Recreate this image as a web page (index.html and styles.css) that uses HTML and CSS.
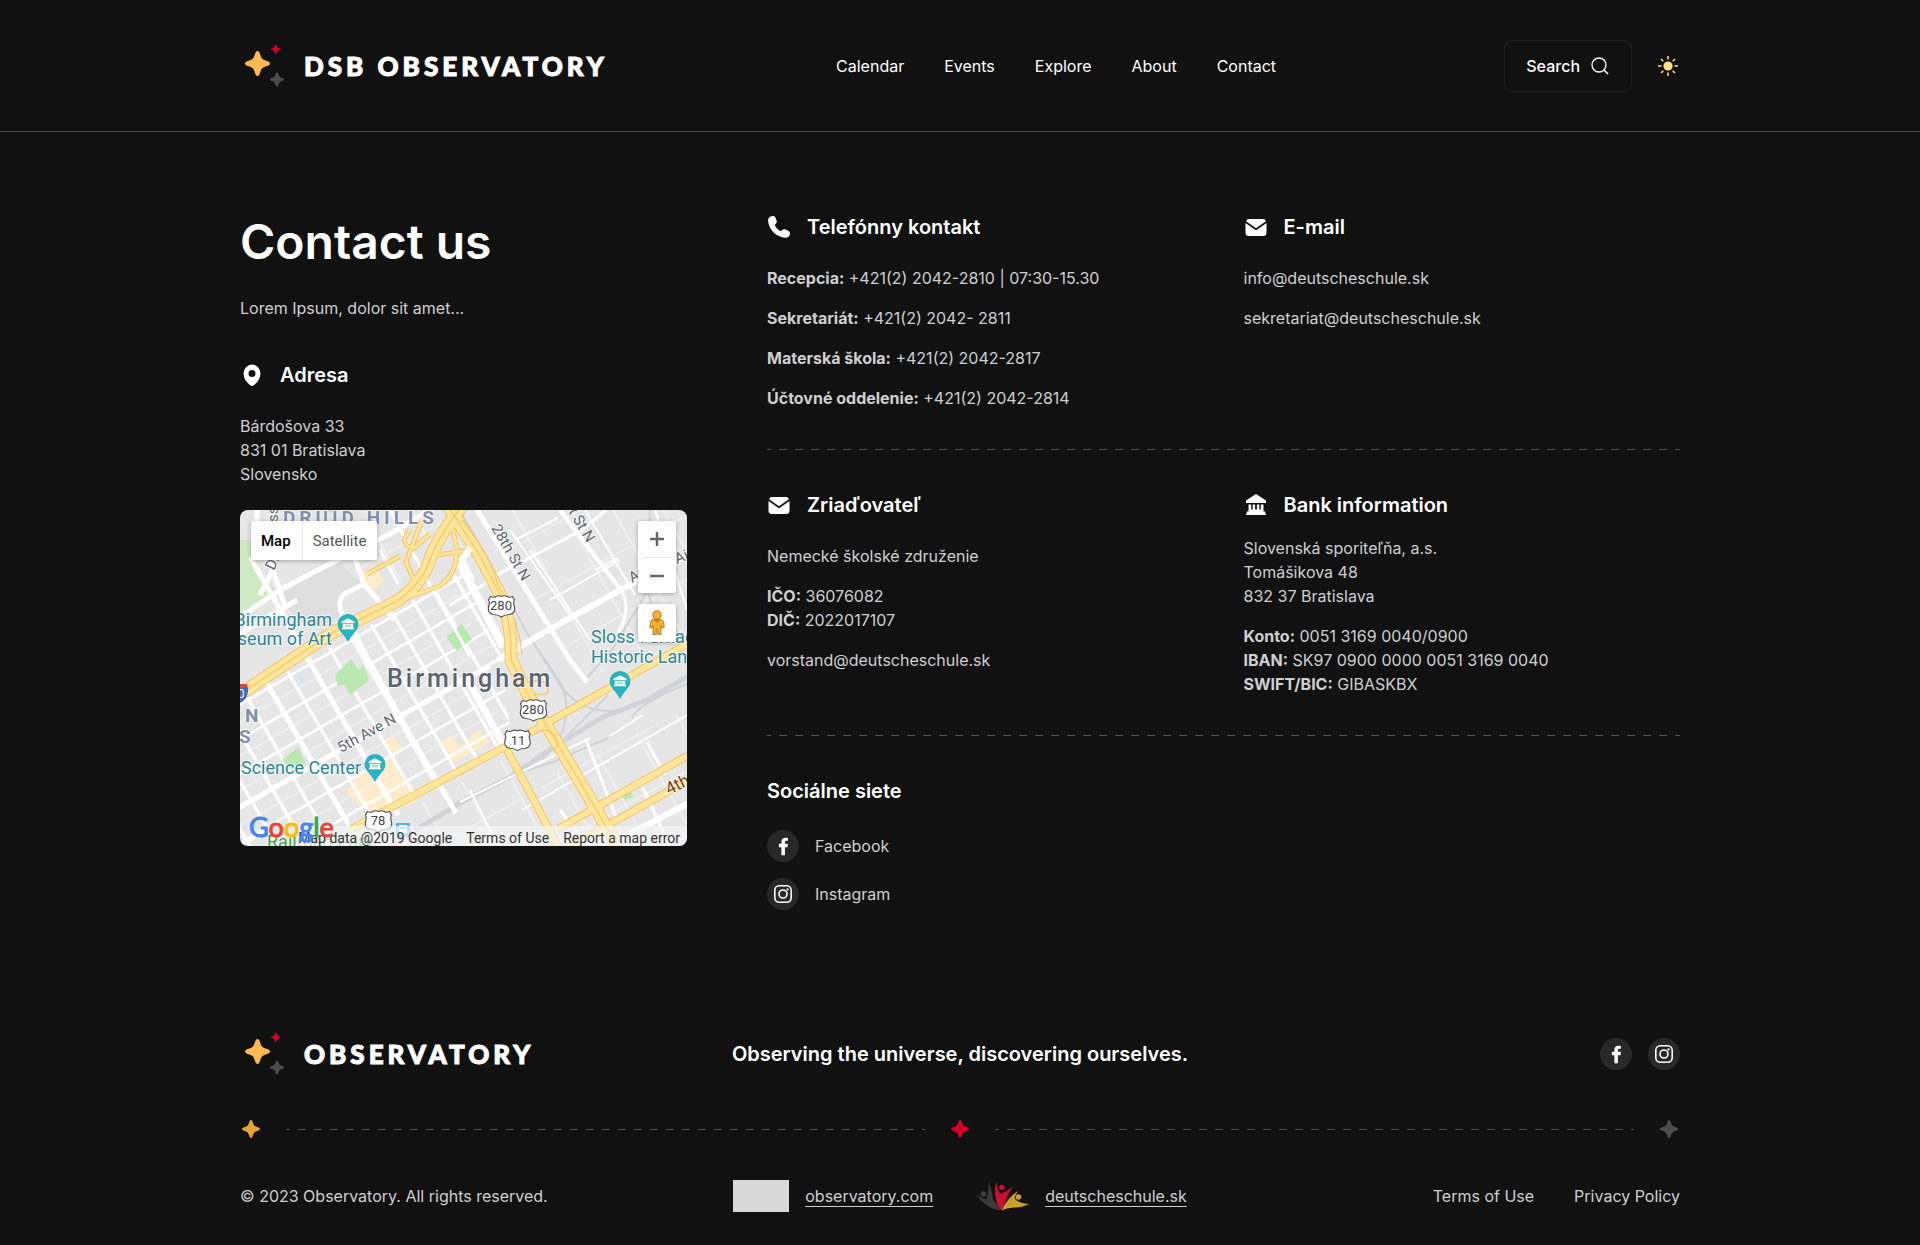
FILE: index.html
```html
<!DOCTYPE html>
<html lang="sk">
<head>
    <meta charset="UTF-8">
    <meta name="viewport" content="width=device-width, initial-scale=1.0">
    <title>Contact us - DSB Observatory</title>
    <link rel="stylesheet" href="styles.css">
</head>
<body>
    <!-- shared icons -->
    <svg class="sprite" aria-hidden="true">
        <symbol id="star" viewBox="-10 -10 20 20">
            <path d="M0-10C1-10 1.500-9.200 2.200-7C3.200-3.900 3.900-3.200 7-2.200C9.200-1.500 10-1 10 0C10 1 9.200 1.500 7 2.200C3.900 3.200 3.200 3.900 2.200 7C1.500 9.200 1 10 0 10C-1 10-1.500 9.200-2.200 7C-3.200 3.900-3.900 3.200-7 2.200C-9.200 1.500-10 1-10 0C-10-1-9.200-1.500-7-2.200C-3.900-3.200-3.200-3.900-2.200-7C-1.500-9.200-1-10 0-10Z"/>
        </symbol>
        <symbol id="logo-mark" viewBox="0 0 48 48">
            <use href="#star" x="5" y="9" width="25" height="25" fill="#ffb950"/>
            <use href="#star" x="31" y="2.500" width="9.500" height="9.500" fill="#d80027"/>
            <use href="#star" x="30" y="30.500" width="14" height="14" fill="#4d4d4d"/>
        </symbol>
        <symbol id="mail" viewBox="0 0 24 24">
            <path d="M5 4h14a3 3 0 0 1 2.900 2.300L12 13.200 2.100 6.300A3 3 0 0 1 5 4Z"/>
            <path d="M1.500 8l9.600 6.700a1.600 1.600 0 0 0 1.800 0L22.500 8v9.500A3.500 3.500 0 0 1 19 21H5a3.500 3.500 0 0 1-3.500-3.500Z"/>
        </symbol>
        <symbol id="facebook" viewBox="0 0 32 32">
            <path d="M17.900 25.200v-8h2.600l.4-3.400h-3v-1.500c0-.9.300-1.500 1.500-1.500h1.500V7.900a20 20 0 0 0-2.400-.1c-2.500 0-4.100 1.400-4.100 4v2h-2.500v3.400h2.500v8Z"/>
        </symbol>
        <symbol id="instagram" viewBox="0 0 32 32">
            <rect x="7.800" y="7.800" width="16.400" height="16.400" rx="4.500" fill="none" stroke="currentColor" stroke-width="1.600"/>
            <circle cx="16" cy="16" r="4" fill="none" stroke="currentColor" stroke-width="1.600"/>
            <circle cx="20.600" cy="11.400" r="1.100"/>
        </symbol>
        <symbol id="museum-pin" viewBox="0 0 24 30">
            <path d="M12 1a10.400 10.400 0 0 1 10.400 10.400c0 6-6.400 9.600-10.400 17.600C8 21 1.600 17.400 1.600 11.400A10.400 10.400 0 0 1 12 1Z" fill="#28b2c3"/>
            <path d="M12 5.300l6.400 3.500v1.400H5.600V8.800ZM6.800 11h10.400v4H18v1.300H6V15h.8Z" fill="#fff"/>
            <path d="M10 11.500v3M12 11.500v3M14 11.500v3" stroke="#28b2c3" stroke-width=".8"/>
        </symbol>
        <symbol id="us-shield" viewBox="0 0 30 24">
            <path d="M4 2.500Q7 4 9.500 2.500Q12 1 15 2.500Q18 1 20.500 2.500Q23 4 26 2.500L28 6Q26.500 8 27.500 11Q30 19 23 20.500Q18 20.500 15 23Q12 20.500 7 20.500Q0 19 2.500 11Q3.500 8 2 6Z" fill="#fff" stroke="#555" stroke-width="1.200"/>
        </symbol>
    </svg>

    <header class="header">
        <div class="container header-inner">
            <a href="#" class="logo">
                <svg class="logo-mark" aria-hidden="true"><use href="#logo-mark"/></svg>
                <span class="logo-text">DSB OBSERVATORY</span>
            </a>
            <nav class="nav">
                <a href="#">Calendar</a>
                <a href="#">Events</a>
                <a href="#">Explore</a>
                <a href="#">About</a>
                <a href="#">Contact</a>
            </nav>
            <div class="header-actions">
                <button type="button" class="search-btn">
                    Search
                    <svg class="search-icon" viewBox="0 0 20 20" aria-hidden="true">
                        <circle cx="9" cy="9" r="7" fill="none" stroke="currentColor" stroke-width="1.300"/>
                        <path d="M14 14l4 4" stroke="currentColor" stroke-width="1.600"/>
                    </svg>
                </button>
                <button type="button" class="theme-btn" aria-label="Light theme">
                    <svg viewBox="0 0 24 24" aria-hidden="true">
                        <circle cx="12" cy="12" r="4.600" fill="#ffe27a"/>
                        <path d="M12 2v3.500M12 18.500V22M2 12h3.500M18.500 12H22M5 5l2.300 2.300M16.700 16.700L19 19M5 19l2.300-2.300M16.700 7.300L19 5" stroke="#ffe27a" stroke-width="1.500"/>
                    </svg>
                </button>
            </div>
        </div>
    </header>

    <main class="container contact">
        <section class="contact-left">
            <h1>Contact us</h1>
            <p class="lead">Lorem Ipsum, dolor sit amet...</p>
            <h2 class="title">
                <svg viewBox="0 0 24 24" aria-hidden="true"><path fill-rule="evenodd" d="M12 1.500A8.400 8.800 0 0 1 20.400 10.500C20.400 16 17 19.500 13.800 22.300a3 3 0 0 1-3.600 0C7 19.500 3.600 16 3.600 10.500A8.400 8.800 0 0 1 12 1.500ZM12 7a3.500 3.500 0 1 0 0 7a3.500 3.500 0 0 0 0-7Z"/></svg>
                Adresa
            </h2>
            <address>Bárdošova 33<br>831 01 Bratislava<br>Slovensko</address>

            <div class="map">
                <svg class="map-canvas" viewBox="0 0 447 336" preserveAspectRatio="xMidYMid slice" role="img" aria-label="Map of Birmingham">
                    <defs>
                        <pattern id="blocks" width="24" height="30" patternUnits="userSpaceOnUse" patternTransform="translate(0 297) rotate(-30)">
                            <path d="M0 16h24" stroke="#f5f5f5" stroke-width="1"/>
                            <path d="M0 1h24M13 0v30" stroke="#fff" stroke-width="3"/>
                        </pattern>
                        <pattern id="suburb" width="44" height="56" patternUnits="userSpaceOnUse" patternTransform="translate(310 113) rotate(-29)">
                            <path d="M0 28h44M22 0v56" stroke="#f6f6f6" stroke-width="1.200"/>
                        </pattern>
                    </defs>
                    <rect width="447" height="336" fill="#e6e6e6"/>

                    <!-- plazas -->
                    <path d="M52 163L70 151L79 166L62 174Z" fill="#dfe5ea"/>
                    <g fill="#fdeccb">
                        <path d="M106 282L118 265L134 258L152 248L158 262L170 272L178 292L158 298L135 308L120 296Z"/>
                        <path d="M142 232L152 225L163 238L156 246Z"/>
                        <path d="M198 232L214 224L218 238L240 220L250 232L216 252L206 246Z"/>
                        <path d="M120 64L134 56L144 70L136 80L126 76Z"/>
                    </g>

                    <!-- street grids -->
                    <path d="M0 188L50 160L150 104L220 62L262 147L272 240L150 298L110 320V336H0Z" fill="url(#blocks)"/>
                    <path d="M235 0H447V120L372 170L310 120L275 60Z" fill="url(#suburb)"/>
                    <path d="M300 270L447 200V336H318ZM140 315L262 250L310 336H140Z" fill="url(#suburb)"/>
                    <path d="M140 0H215L195 40L175 74L120 60Z" fill="url(#suburb)"/>

                    <!-- parks -->
                    <path d="M0 30H11L22 68L36 80L0 106Z" fill="#ceeac5"/>
                    <g fill="#b9e8b0">
                        <path d="M206 127L222 114L232 129L217 141Z"/>
                        <path d="M95 165L111 149L118 159L124 155L129 171L110 185L104 174L98 176Z"/>
                        <path d="M42 250L58 238L66 253L52 260Z"/>
                        <path d="M382 286L391 282L393 287L385 290Z"/>
                        <path d="M86 0L92 3L97 0Z"/>
                    </g>
                    <path d="M42 84L60 70L100 52L112 66L124 74L100 86L103 103L84 116L62 112L45 96Z" fill="#dedede"/>

                    <!-- rail -->
                    <g fill="none" stroke="#d0d4d8" stroke-width="2">
                        <path d="M150 336L220 293L270 267L320 233L363 207L407 190L447 167" stroke-width="5"/>
                        <path d="M220 0L260 73L287 123L312 160Q336 190 320 228L302 250"/>
                        <path d="M287 123L318 172Q340 206 380 200M320 233L368 185M345 170L372 140L408 80L410 0M282 262L313 252L368 228"/>
                        <path d="M392 208Q396 195 447 174M408 80L420 130"/>
                    </g>

                    <!-- white streets -->
                    <g fill="none" stroke="#fff" stroke-width="5" stroke-linejoin="round">
                        <path d="M0 297L153 210L250 156"/>
                        <path d="M0 124L57 90M0 107L40 80L105 46L150 24L190 0"/>
                        <path d="M10 47L33 87L80 170L158 305"/>
                        <path d="M27 173L107 312"/>
                        <path d="M17 0V30L33 60L45 96M33 60L20 85"/>
                        <path d="M112 40L124 74L104 84Q96 92 103 106M124 74L155 110"/>
                        <path d="M108 110L123 140L170 225L216 303"/>
                        <path d="M220 53L263 137" stroke-width="8"/>
                        <path d="M228 170L265 238" stroke-width="7"/>
                        <path d="M237 0L330 150L347 172"/>
                        <path d="M320 0L383 83" stroke-width="4"/>
                        <path d="M383 83Q392 106 373 130" stroke-width="3"/>
                        <path d="M258 150L303 123L420 58L447 46" stroke-width="6"/>
                        <path d="M253 67L342 20L366 0M210 95L248 72" stroke-width="3"/>
                        <path d="M400 272L430 336M346 230L378 312M320 300L348 336M407 232L425 265" stroke-width="3"/>
                        <path d="M378 330L447 294" stroke-width="6"/>
                        <path d="M150 0L190 75L230 146M0 336L40 312M140 40L158 74" stroke-width="3"/>
                    </g>
                    <g fill="none" stroke="#fff" stroke-width="2">
                        <path d="M270 20L330 105M290 40L350 130M345 0L395 85M275 30L318 8M310 90L380 50M355 60L378 48M220 292L350 228M282 300L447 205M370 226L403 205M230 280L255 330M415 0L447 100"/>
                    </g>

                    <!-- highways -->
                    <g fill="none" stroke="#f2c667" stroke-width="13" stroke-linejoin="round">
                        <path d="M-4 187L90 124L157 91Q181 75 189 52Q198 26 222-4"/>
                        <path d="M208-4L240 46L262 88Q272 115 271 150L287 183L323 243L374 330L378 340"/>
                        <path d="M267 240L290 283L318 336M110 320L150 298L263 238L330 200L447 134M318 319L447 246M330 336L447 271" stroke-width="8"/>
                        <path d="M157 91L200 76Q225 58 212 18M170 20Q158 35 174 38L190 24M190 46L232 40M174 70L166 52L182 10M127 64L160 46" stroke-width="5"/>
                    </g>
                    <g fill="none" stroke="#ffe69a" stroke-width="11" stroke-linejoin="round">
                        <path d="M-4 187L90 124L157 91Q181 75 189 52Q198 26 222-4"/>
                        <path d="M208-4L240 46L262 88Q272 115 271 150L287 183L323 243L374 330L378 340"/>
                        <path d="M267 240L290 283L318 336M110 320L150 298L263 238L330 200L447 134M318 319L447 246M330 336L447 271" stroke-width="6"/>
                        <path d="M157 91L200 76Q225 58 212 18M170 20Q158 35 174 38L190 24M190 46L232 40M174 70L166 52L182 10M127 64L160 46" stroke-width="3"/>
                    </g>
                    <g fill="none" stroke="#f2c667" stroke-width="1.200">
                        <path d="M-4 187L90 124L157 91Q181 75 189 52Q198 26 222-4"/>
                        <path d="M208-4L240 46L262 88Q272 115 271 150L287 183L323 243L374 330"/>
                        <path d="M222 10Q250 45 258 75Q280 112 282 145M293 183Q309 188 308 178Q302 166 290 173M300 220Q322 220 315 240"/>
                    </g>
                    <path d="M232 70L222 50L230 38" fill="none" stroke="#fff" stroke-width="6"/>

                    <!-- labels -->
                    <g class="map-label">
                        <g font-weight="700" fill="#8190a9">
                            <text x="43" y="14" font-size="19" letter-spacing="4">DRUID HILLS</text>
                            <text x="5" y="212" font-size="19">N</text>
                            <text x="-1" y="233" font-size="19">S</text>
                        </g>
                        <text x="147" y="177" font-size="25" font-weight="500" letter-spacing="3" fill="#5b6471">Birmingham</text>
                        <g font-size="18" fill="#2b8590">
                            <text x="92" y="116" text-anchor="end">Birmingham</text>
                            <text x="92" y="135" text-anchor="end">Museum of Art</text>
                            <text x="1" y="264">Science Center</text>
                            <text x="351" y="133">Sloss Furnaces</text>
                            <text x="351" y="153">Historic Landmark</text>
                        </g>
                        <g font-size="15" fill="#5f6670">
                            <text transform="translate(251 18) rotate(60)">28th St N</text>
                            <text transform="translate(316-20) rotate(60)">31st St N</text>
                            <text transform="translate(101 243) rotate(-29)">5th Ave N</text>
                            <text transform="translate(437 54) rotate(-22)">Airport</text>
                            <text transform="translate(392 73) rotate(-28)">Ave</text>
                            <text transform="translate(38 12) rotate(-90)">ssy</text>
                            <text transform="translate(34 61) rotate(-65)">Dr</text>
                        </g>
                        <text transform="translate(429 285) rotate(-27)" font-size="17" fill="#7a3e0c">4th Ave S</text>
                        <text x="27" y="338" font-size="18" fill="#3e9a46">Railroad Park</text>
                    </g>

                    <use href="#museum-pin" x="96" y="103" width="24" height="30"/>
                    <use href="#museum-pin" x="123" y="243" width="24" height="30"/>
                    <use href="#museum-pin" x="368" y="160" width="24" height="30"/>
                    <g class="map-shield">
                        <use href="#us-shield" x="246" y="84" width="31" height="24"/>
                        <text x="261" y="100">280</text>
                        <use href="#us-shield" x="278" y="188" width="31" height="24"/>
                        <text x="293" y="204">280</text>
                        <use href="#us-shield" x="263" y="218" width="29" height="24"/>
                        <text x="278" y="235">11</text>
                        <use href="#us-shield" x="123" y="299" width="31" height="24"/>
                        <text x="138" y="315">78</text>
                    </g>
                    <path d="M-8 174H7L8 178H-8Z" fill="#d3443c"/>
                    <path d="M-8 178H8Q9 188 0 193Q-8 190-8 178Z" fill="#3a6bc0"/>
                    <text x="-9" y="188" font-family="Roboto, sans-serif" font-size="12" fill="#fff">20</text>
                    <rect x="156" y="313" width="14" height="14" rx="1" fill="#4fb6ea"/>
                    <rect x="159" y="315" width="8" height="8" rx="1" fill="#fff"/>
                    <path d="M160 318h6" stroke="#4fb6ea" stroke-width="2"/>
                </svg>

                <div class="map-type">
                    <button type="button" class="active">Map</button>
                    <button type="button">Satellite</button>
                </div>
                <div class="map-controls">
                    <div class="map-zoom">
                        <button type="button" aria-label="Zoom in"><svg viewBox="0 0 14 14"><path d="M7 0v14M0 7h14" stroke="#666" stroke-width="2.500"/></svg></button>
                        <button type="button" aria-label="Zoom out"><svg viewBox="0 0 14 14"><path d="M0 7h14" stroke="#666" stroke-width="2.500"/></svg></button>
                    </div>
                    <button type="button" class="map-pegman" aria-label="Street View">
                        <svg viewBox="0 0 16 26">
                            <path d="M4 9.500h8q2 0 2.400 2.500l.9 5q-.3 1.500-2 1L12 15.500V24.500H8.700V19H7.300v5.500H4V15.500L2.700 18q-1.700.5-2-1l.9-5Q2 9.500 4 9.500Z" fill="#f9b02b" stroke="#9a6a25" stroke-width=".8"/>
                            <circle cx="8" cy="5" r="4.300" fill="#f9b02b" stroke="#9a6a25" stroke-width=".8"/>
                            <path d="M4 9.500h8L8 13Z" fill="#e9741e"/>
                        </svg>
                    </button>
                </div>
                <div class="map-bar">
                    <span>Map data @2019 Google</span>
                    <a href="#">Terms of Use</a>
                    <a href="#">Report a map error</a>
                </div>
                <div class="map-google"><span class="g-blue">G</span><span class="g-red">o</span><span class="g-yellow">o</span><span class="g-blue">g</span><span class="g-green">l</span><span class="g-red">e</span></div>
            </div>
        </section>

        <div class="contact-right">
            <div class="info-row">
                <section class="info">
                    <h2 class="title">
                        <svg viewBox="0 0 24 24" aria-hidden="true"><path d="M4.500 1.200C6 .8 7.500 1 8.200 2.300L9.600 5.600C10 6.800 9.700 8 8.800 8.900L8 9.700C7.600 10.300 8.600 12 10.200 13.700C11.900 15.300 13.500 16.300 14.200 15.900L15.200 15C16.100 14.200 17.400 14 18.500 14.500L21.600 16C23 16.700 23.200 18.200 22.800 19.500C22.200 21.700 20.500 22.800 18.300 22.700C14 22.600 9.500 20.500 6.400 17.300C3.200 14 1.200 9.700 1.100 5.600C1 3.300 2.500 1.700 4.500 1.200Z"/></svg>
                        Telefónny kontakt
                    </h2>
                    <p><strong>Recepcia:</strong> +421(2) 2042-2810 | 07:30-15.30</p>
                    <p><strong>Sekretariát:</strong> +421(2) 2042- 2811</p>
                    <p><strong>Materská škola:</strong> +421(2) 2042-2817</p>
                    <p><strong>Účtovné oddelenie:</strong> +421(2) 2042-2814</p>
                </section>
                <section class="info">
                    <h2 class="title">
                        <svg aria-hidden="true"><use href="#mail"/></svg>
                        E-mail
                    </h2>
                    <p><a href="mailto:info@deutscheschule.sk">info@deutscheschule.sk</a></p>
                    <p><a href="mailto:sekretariat@deutscheschule.sk">sekretariat@deutscheschule.sk</a></p>
                </section>
            </div>
            <hr class="dashes">
            <div class="info-row">
                <section class="info">
                    <h2 class="title">
                        <svg aria-hidden="true"><use href="#mail"/></svg>
                        Zriaďovateľ
                    </h2>
                    <p>Nemecké školské združenie</p>
                    <p><strong>IČO:</strong> 36076082<br><strong>DIČ:</strong> 2022017107</p>
                    <p><a href="mailto:vorstand@deutscheschule.sk">vorstand@deutscheschule.sk</a></p>
                </section>
                <section class="info info-bank">
                    <h2 class="title">
                        <svg viewBox="0 0 24 24" aria-hidden="true"><path d="M12 1l10 6.500V10H2V7.500ZM4.500 11.500h2.700v6H4.500ZM8.700 11.500h2.400v6H8.700ZM12.900 11.500h2.400v6h-2.400ZM16.800 11.500h2.700v6h-2.700ZM4.500 16.500h15v2H21L22 22H2L3 18.500h1.500Z"/></svg>
                        Bank information
                    </h2>
                    <p>Slovenská sporiteľňa, a.s.<br>Tomášikova 48<br>832 37 Bratislava</p>
                    <p><strong>Konto:</strong> 0051 3169 0040/0900<br><strong>IBAN:</strong> SK97 0900 0000 0051 3169 0040<br><strong>SWIFT/BIC:</strong> GIBASKBX</p>
                </section>
            </div>
            <hr class="dashes">
            <section class="info">
                <h2 class="title">Sociálne siete</h2>
                <ul class="social-list">
                    <li><a href="#"><svg class="social-icon" aria-hidden="true"><use href="#facebook"/></svg>Facebook</a></li>
                    <li><a href="#"><svg class="social-icon" aria-hidden="true"><use href="#instagram"/></svg>Instagram</a></li>
                </ul>
            </section>
        </div>
    </main>

    <footer class="container footer">
        <div class="footer-row">
            <a href="#" class="logo">
                <svg class="logo-mark" aria-hidden="true"><use href="#logo-mark"/></svg>
                <span class="logo-text">OBSERVATORY</span>
            </a>
            <p class="motto">Observing the universe, discovering ourselves.</p>
            <div class="footer-social">
                <a href="#" aria-label="Facebook"><svg class="social-icon" aria-hidden="true"><use href="#facebook"/></svg></a>
                <a href="#" aria-label="Instagram"><svg class="social-icon" aria-hidden="true"><use href="#instagram"/></svg></a>
            </div>
        </div>
        <div class="star-line">
            <svg class="star star-yellow" aria-hidden="true"><use href="#star"/></svg>
            <hr class="dashes">
            <svg class="star star-red" aria-hidden="true"><use href="#star"/></svg>
            <hr class="dashes">
            <svg class="star star-grey" aria-hidden="true"><use href="#star"/></svg>
        </div>
        <div class="footer-row">
            <p>© 2023 Observatory. All rights reserved.</p>
            <div class="partners">
                <a href="#" class="partner"><span class="partner-box"></span><span class="partner-name">observatory.com</span></a>
                <a href="#" class="partner">
                    <svg class="partner-logo" viewBox="0 0 56 32" aria-hidden="true">
                        <path d="M27.500 30.500Q19 29.500 12 24Q6 19 3 13.500Q8.500 18.500 13.500 19.500Q16.500 9 15.500 1.500Q20 13 20 20Q25 24 27.500 30.500Z" fill="#3a3a3a"/>
                        <circle cx="10.500" cy="14" r="2.800" fill="#3a3a3a"/>
                        <path d="M27.800 30.500Q18.500 15 23.500 1.500Q24 8 27 13.500Q32 13 41 5.500Q35 13 34 18Q32 25 27.800 30.500Z" fill="#c8102e"/>
                        <circle cx="29" cy="7.500" r="2.800" fill="#c8102e"/>
                        <path d="M28.500 30.500Q31 25 35 20Q39 15 45.500 10.500Q41 16 42 19Q46 23 56 24Q48 28 41 27.500Q33 28 28.500 30.500Z" fill="#c9a227"/>
                        <circle cx="45.500" cy="17" r="2.800" fill="#c9a227"/>
                    </svg>
                    <span class="partner-name">deutscheschule.sk</span>
                </a>
            </div>
            <div class="legal">
                <a href="#">Terms of Use</a>
                <a href="#">Privacy Policy</a>
            </div>
        </div>
    </footer>
</body>
</html>
```
FILE: styles.css
```css
* {
    box-sizing: border-box;
}
body {
    margin: 0;
    background-color: #111;
    color: #cfcfd3;
    font-family: Inter, sans-serif;
    font-size: 16px;
    line-height: 24px;
}
h1, h2, p, ul, hr {
    margin: 0;
}
a {
    color: inherit;
    text-decoration: none;
}
button {
    padding: 0;
    border: none;
    background: none;
    color: inherit;
    font: inherit;
    cursor: pointer;
}
svg {
    display: block;
    fill: currentColor;
}
.sprite {
    position: absolute;
    width: 0;
    height: 0;
}
.container {
    width: 100%;
    max-width: 1488px;
    margin: 0 auto;
    padding: 0 24px;
}

/* header */
.header {
    border-bottom: 1px solid #4d4d4d;
    color: #fff;
}
.header-inner {
    display: flex;
    justify-content: space-between;
    align-items: center;
    padding-top: 40px;
    padding-bottom: 39px;
}
.logo {
    display: flex;
    align-items: center;
    gap: 16px;
    color: #fff;
}
.logo-mark {
    width: 48px;
    height: 48px;
}
.logo-text {
    font-family: Lato, sans-serif;
    font-size: 26px;
    font-weight: 900;
    letter-spacing: 4px;
    -webkit-text-stroke: 1px currentColor;
}
.nav {
    display: flex;
    gap: 40px;
}
.header-actions {
    display: flex;
    align-items: center;
    gap: 24px;
}
.search-btn {
    display: flex;
    align-items: center;
    gap: 10px;
    height: 52px;
    padding: 0 21px;
    border: 1px solid #1d1f21;
    border-radius: 8px;
    font-weight: 500;
}
.search-icon {
    width: 20px;
    height: 20px;
}
.theme-btn {
    width: 24px;
    height: 24px;
}

/* contact */
.contact {
    display: grid;
    grid-template-columns: 447fr 913fr;
    gap: 80px;
    padding-top: 80px;
    padding-bottom: 120px;
}
h1 {
    color: #fff;
    font-size: 48px;
    font-weight: 600;
    line-height: 60px;
}
.lead {
    margin: 24px 0 40px;
}
.title {
    display: flex;
    align-items: center;
    gap: 16px;
    color: #fff;
    font-size: 20px;
    font-weight: 600;
    line-height: 30px;
}
.title svg {
    width: 24px;
    height: 24px;
}
address {
    margin: 24px 0;
    font-style: normal;
}
.info-row {
    display: grid;
    grid-template-columns: 1fr 1fr;
    gap: 40px;
}
.info .title {
    margin-bottom: 24px;
}
.info-bank .title {
    margin-bottom: 16px;
}
.info p + p {
    margin-top: 16px;
}
.dashes {
    height: 1px;
    border: none;
    background: repeating-linear-gradient(90deg, #4d4d4d 0 4px, transparent 4px 12px, #4d4d4d 12px 16px);
}
.contact-right .dashes {
    margin: 39px 0 40px;
}
.social-list {
    display: grid;
    gap: 16px;
    padding: 0;
    list-style: none;
}
.social-list a {
    display: flex;
    align-items: center;
    gap: 16px;
}
.social-icon {
    width: 32px;
    height: 32px;
    border-radius: 50%;
    background-color: #282828;
    color: #fff;
}

/* map */
.map {
    position: relative;
    height: 336px;
    border-radius: 8px;
    overflow: hidden;
    font-family: Roboto, sans-serif;
}
.map-canvas {
    width: 100%;
    height: 100%;
}
.map-label {
    font-family: Roboto, sans-serif;
    stroke: #fff;
    stroke-width: 2px;
    stroke-opacity: 0.7;
    paint-order: stroke;
}
.map-shield {
    fill: #444;
    font-family: Roboto, sans-serif;
    font-size: 13px;
    text-anchor: middle;
}
.map-type {
    position: absolute;
    top: 11px;
    left: 11px;
    display: flex;
    border-radius: 2px;
    background-color: #fff;
    box-shadow: 0 1px 4px rgba(0, 0, 0, 0.3);
    color: #565656;
    font-size: 15px;
}
.map-type button {
    height: 39px;
    padding: 0 11px 0 10px;
}
.map-type .active {
    border-right: 1px solid #e6e6e6;
    color: #000;
    font-weight: 500;
}
.map-controls {
    position: absolute;
    top: 11px;
    right: 11px;
    display: grid;
    gap: 11px;
}
.map-zoom, .map-pegman {
    width: 38px;
    border-radius: 2px;
    background-color: #fff;
    box-shadow: 0 1px 4px rgba(0, 0, 0, 0.3);
}
.map-zoom {
    padding: 0 5px;
}
.map-zoom button, .map-pegman {
    display: flex;
    justify-content: center;
    align-items: center;
}
.map-zoom button {
    width: 100%;
    height: 36px;
}
.map-zoom button + button {
    border-top: 1px solid #e6e6e6;
}
.map-zoom svg {
    width: 14px;
    height: 14px;
}
.map-pegman {
    height: 38px;
}
.map-pegman svg {
    width: 16px;
    height: 26px;
}
.map-google {
    position: absolute;
    bottom: 3px;
    left: 9px;
    font-family: Lato, sans-serif;
    font-size: 27px;
    line-height: 32px;
    -webkit-text-stroke: 1px currentColor;
}
.g-blue {
    color: #4285f4;
}
.g-red {
    color: #ea4335;
}
.g-yellow {
    color: #fbbc05;
}
.g-green {
    color: #34a853;
}
.map-bar {
    position: absolute;
    right: 0;
    bottom: 0;
    display: flex;
    gap: 14px;
    padding: 4px 7px 0 0;
    background-color: rgba(245, 245, 245, 0.7);
    color: #333;
    font-size: 14px;
    line-height: 16px;
    white-space: nowrap;
}

/* footer */
.footer {
    display: grid;
    gap: 40px;
    padding-bottom: 33px;
}
.footer-row {
    display: grid;
    grid-template-columns: 1fr auto 1fr;
    align-items: center;
}
.motto {
    color: #fff;
    font-size: 20px;
    font-weight: 600;
}
.footer-social {
    display: flex;
    justify-content: flex-end;
    gap: 16px;
}
.star-line {
    display: flex;
    align-items: center;
    gap: 24px;
}
.star-line .dashes {
    flex: 1;
}
.star {
    width: 22px;
    height: 22px;
    padding: 2px;
}
.star-yellow {
    color: #e9a23b;
}
.star-red {
    color: #d80027;
}
.star-grey {
    color: #4d4d4d;
}
.partners, .legal {
    display: flex;
    gap: 40px;
}
.legal {
    justify-content: flex-end;
}
.partner {
    display: flex;
    align-items: center;
    gap: 16px;
}
.partner-box, .partner-logo {
    width: 56px;
    height: 32px;
}
.partner-box {
    background-color: #d9d9d9;
}
.partner-name {
    text-decoration: underline;
    text-underline-offset: 4px;
}
```
